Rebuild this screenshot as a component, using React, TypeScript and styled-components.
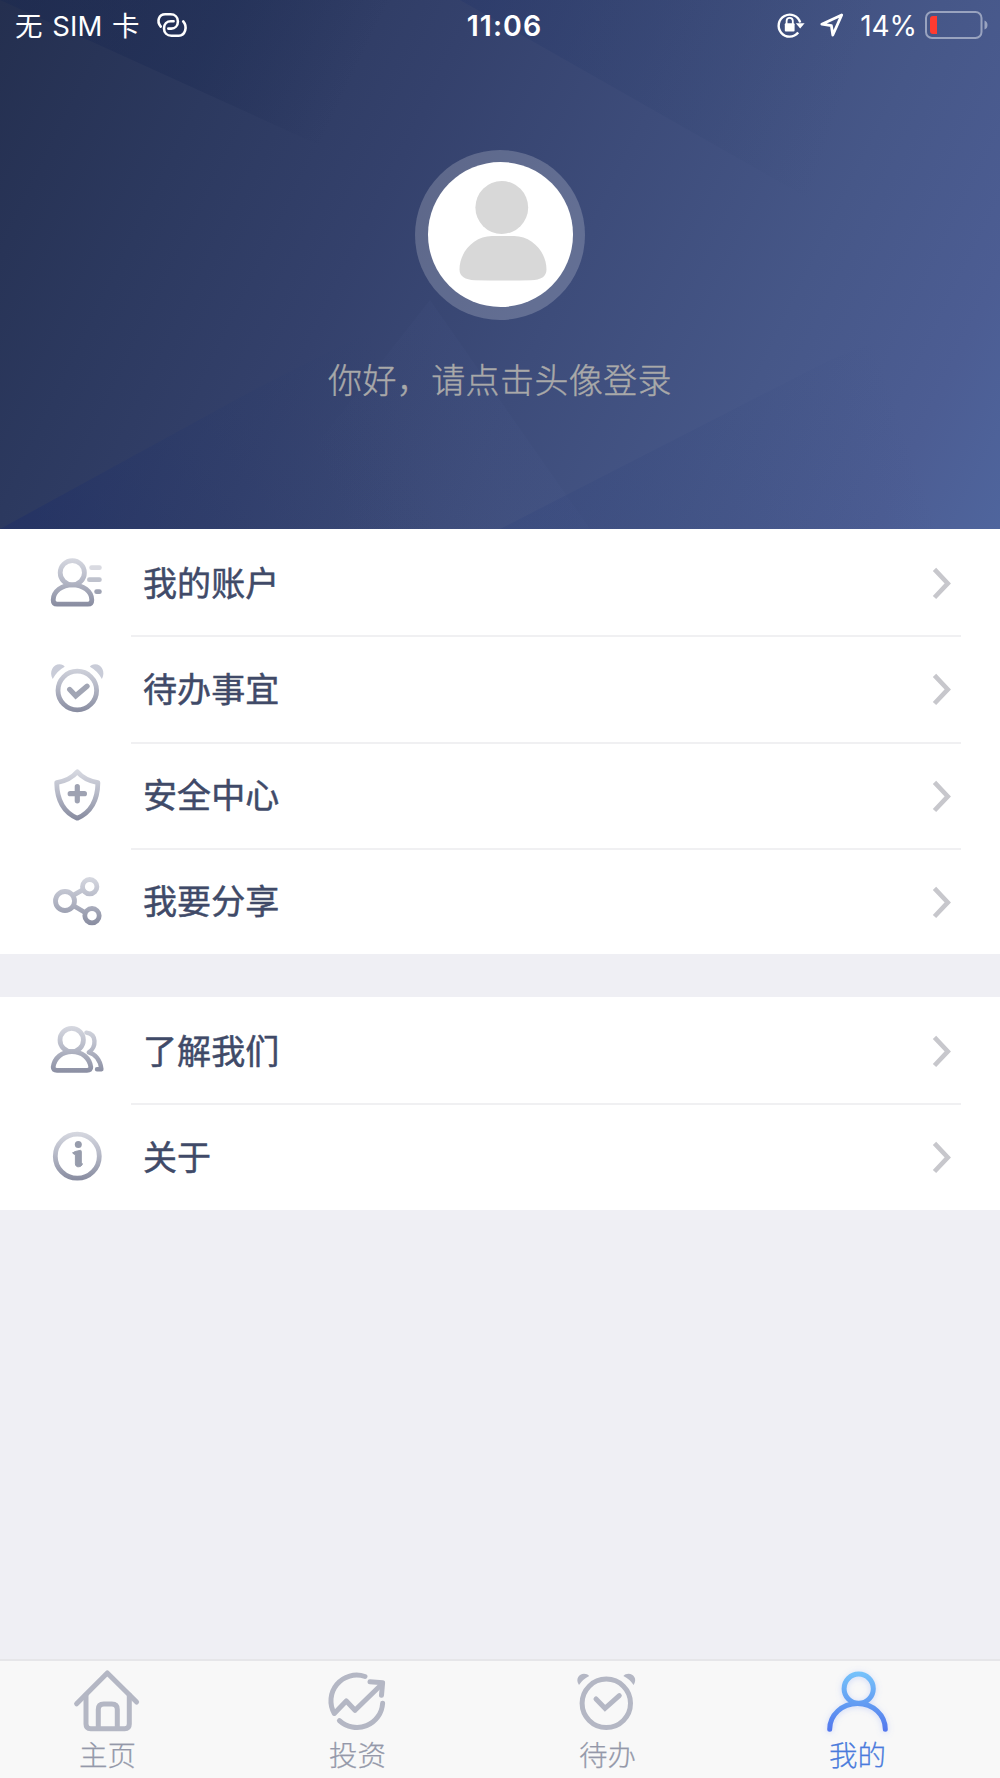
import React from "react";
import styled, { createGlobalStyle } from "styled-components";

const GlobalStyle = createGlobalStyle`
  * { box-sizing: border-box; }
  html, body { margin: 0; padding: 0; }
  body {
    background: #efeff4;
    font-family: Inter, "Noto Sans CJK SC", sans-serif;
  }
`;

const Screen = styled.div`
  width: 1000px;
  height: 1778px;
  display: flex;
  flex-direction: column;
  background: #efeff4;
  overflow: hidden;
`;

const Header = styled.header`
  position: relative;
  height: 529px;
  flex: none;
  display: flex;
  flex-direction: column;
  align-items: center;
  background: linear-gradient(116deg, #242f4f 0%, #2c395f 20%, #34416c 38%, #3d4c7a 56%, #465788 75%, #4c5d93 90%, #4f659d 100%);
`;

const Facets = styled.svg`
  position: absolute;
  inset: 0;
  width: 100%;
  height: 100%;
`;

const StatusBar = styled.div`
  position: relative;
  width: 100%;
  height: 50px;
  padding: 0 12px 0 15px;
  display: grid;
  grid-template-columns: 1fr auto 1fr;
  align-items: center;
  color: #fff;
  font-size: 28px;
  line-height: 50px;
`;

const StatusSide = styled.div<{ $end?: boolean }>`
  display: flex;
  align-items: center;
  justify-content: ${(p) => (p.$end ? "flex-end" : "flex-start")};
  white-space: pre;
`;

const Carrier = styled.span`
  width: 142px;
  font-size: 27.5px;
  letter-spacing: 0.2px;
  word-spacing: 1.5px;
`;

const Clock = styled.span`
  padding: 1px 0 0 6px;
  font-weight: 600;
  font-size: 28.5px;
  letter-spacing: 1.1px;
`;

const Percent = styled.span`
  margin: 0 8px 0 16px;
  font-size: 28px;
  letter-spacing: -0.1px;
`;

const Glyph = styled.svg<{ $gap?: number; $lift?: number }>`
  display: block;
  flex: none;
  margin-right: ${(p) => p.$gap ?? 0}px;
  margin-bottom: ${(p) => p.$lift ?? 0}px;
  overflow: visible;
`;

const Avatar = styled.button`
  position: relative;
  margin: 99.5px 0 0 0;
  width: 170px;
  height: 170px;
  padding: 12.5px;
  border: 0;
  border-radius: 50%;
  background: rgba(255, 255, 255, 0.2);
`;

const Portrait = styled.svg`
  display: block;
  width: 145px;
  height: 145px;
  border-radius: 50%;
  background: #fff;
`;

const Greeting = styled.p`
  position: relative;
  margin: 34.5px 0 0 0;
  line-height: 50px;
  font-size: 34px;
  letter-spacing: 0.4px;
  color: #a9a9a9;
  font-weight: 300;
  -webkit-text-stroke: 0.4px #a9a9a9;
  font-family: "Noto Sans CJK SC", sans-serif;
`;

const Section = styled.section<{ $gap?: boolean }>`
  flex: none;
  background: #fff;
  margin-top: ${(p) => (p.$gap ? 43 : 0)}px;
`;

const Row = styled.div`
  height: 106.25px;
  padding-left: 47px;
  display: flex;
  align-items: center;
`;

const RowBody = styled.div<{ $line: boolean }>`
  flex: 1;
  height: 100%;
  margin: 0 39px 0 23.5px;
  padding: 0 9.5px 0 12.5px;
  display: flex;
  align-items: center;
  justify-content: space-between;
  box-shadow: ${(p) => (p.$line ? "inset 0 2px 0 #f0f0f2" : "none")};
`;

const RowLabel = styled.span`
  font-family: "Noto Sans CJK SC", sans-serif;
  font-size: 34px;
  line-height: 50px;
  padding-bottom: 1px;
  letter-spacing: 0.1px;
  font-weight: 400;
  -webkit-text-stroke: 0.5px #404a68;
  color: #404a68;
`;

const TabBar = styled.nav`
  flex: none;
  margin-top: auto;
  height: 119px;
  display: flex;
  background: #f8f8f8;
  border-top: 2px solid #e6e6e9;
`;

const Tab = styled.div<{ $active?: boolean }>`
  width: 250px;
  padding: 5px 36px 0 0;
  display: flex;
  flex-direction: column;
  align-items: center;
  color: ${(p) => (p.$active ? "#4a7bdc" : "#9498a9")};
`;

const TabLabel = styled.span`
  padding-left: 1px;
  font-family: "Noto Sans CJK SC", sans-serif;
  font-size: 28.5px;
  line-height: 40px;
  font-weight: 300;
  -webkit-text-stroke: 0.25px currentColor;
`;

const TabGlyph = styled.svg`
  display: block;
  width: 70px;
  height: 70px;
  margin-bottom: -2px;
  overflow: visible;
`;

type IconName = "account" | "todo" | "shield" | "share" | "people" | "info";

const shapes: Record<IconName, React.ReactNode> = {
  account: (
    <>
      <circle cx="-4.7" cy="-9.3" r="12.1" />
      <path d="M-19.8 22.2H11Q14.8 22.2 14.8 18C14.8 9.5 6 2.8 -4.5 2.8C-15 2.8 -23.8 9.5 -23.8 18Q-23.8 22.2 -19.8 22.2Z" />
      <path stroke="#d9dae1" d="M14.6 -14.3H22.4" />
      <path stroke="#bfc2cd" d="M12.4 -2.3H22.4" />
      <path stroke="#9ea2b2" d="M19.6 9.7H22.4" />
    </>
  ),
  todo: (
    <>
      <circle cx="0.3" cy="2.5" r="19.3" />
      <path stroke="#a1a5b4" strokeWidth="5.3" strokeLinejoin="miter" d="M-7.3 1.5L-1.3 7.8L10 -1.8" />
      <g fill="#c9ccd8" stroke="none">
        <path d="M-24.3 -9C-28.3 -16 -24 -23.7 -17.5 -23.7C-15 -23.7 -13 -22.7 -12.3 -21.2Q-20 -17 -24.3 -9Z" />
        <path d="M24.9 -9C28.9 -16 24.6 -23.7 18.1 -23.7C15.6 -23.7 13.6 -22.7 12.9 -21.2Q20.6 -17 24.9 -9Z" />
      </g>
    </>
  ),
  shield: (
    <>
      <path d="M0.3 -23.2C-4 -18 -11 -14 -20.3 -12.3C-20 4 -14 17 0.3 23.2C14.6 17 20.6 4 20.9 -12.3C11.6 -14 4.6 -18 0.3 -23.2Z" />
      <path stroke="#9ea2b2" d="M-6.8 -1.3H7.4M0.3 -8.4V5.8" strokeWidth="5.2" />
    </>
  ),
  share: (
    <>
      <circle cx="-12" cy="0" r="9.5" />
      <circle cx="12.7" cy="-14.3" r="7.2" />
      <circle cx="15" cy="14.7" r="7.2" />
      <path d="M-3 -6.2L5.2 -10.8M-3 5L8 11.5" strokeLinecap="butt" />
    </>
  ),
  people: (
    <>
      <circle cx="-5.3" cy="-10" r="11.7" />
      <path d="M-20 20.3H10Q13.8 20.3 13.8 17C12.5 8 5 1.6 -5 1.6C-15 1.6 -22.5 8 -23.8 17Q-23.8 20.3 -20 20.3Z" />
      <path d="M9.4 -17.4C20 -16 19.5 -3 11.8 2.4C18 4 23.5 10 24.4 19.3H20" strokeWidth="4.4" />
    </>
  ),
  info: (
    <>
      <circle cx="0.3" cy="0.2" r="22" />
      <circle cx="1.3" cy="-11.6" r="3.5" fill="#979cac" stroke="none" />
      <path
        fill="#979cac"
        stroke="#979cac"
        strokeWidth="1"
        d="M-4 -3.2Q-3.5 -4.6 3.6 -5.6Q4.3 -5.6 4.3 -4.6V6.9Q5.5 6.9 5.3 8.4C4.5 10.9 -1.3 12.4 -1.6 7.9V-1.6Q-3.6 -1.2 -4 -3.2Z"
      />
    </>
  ),
};

function MenuIcon({ name }: { name: IconName }) {
  const id = `menu-${name}`;
  return (
    <Glyph width="60" height="60" viewBox="-30 -30 60 60" fill="none">
      <defs>
        <linearGradient id={id} gradientUnits="userSpaceOnUse" x1="0" y1="-24" x2="0" y2="24">
          <stop offset="0" stopColor="#d6d8e0" />
          <stop offset="0.45" stopColor="#b7bac8" />
          <stop offset="1" stopColor="#888ca0" />
        </linearGradient>
      </defs>
      <g stroke={`url(#${id})`} strokeWidth="4.8" strokeLinecap="round" strokeLinejoin="round">
        {shapes[name]}
      </g>
    </Glyph>
  );
}

function Chevron() {
  return (
    <Glyph width="20" height="34" viewBox="0 0 20 34" fill="none">
      <path d="M2.5 4.3L15.8 18.4L2.5 32.5" stroke="#c7c7cc" strokeWidth="4.6" />
    </Glyph>
  );
}

function MenuRow({ icon, label, first }: { icon: IconName; label: string; first?: boolean }) {
  return (
    <Row>
      <MenuIcon name={icon} />
      <RowBody $line={!first}>
        <RowLabel>{label}</RowLabel>
        <Chevron />
      </RowBody>
    </Row>
  );
}

const tabLine = {
  stroke: "#b4b7c4",
  strokeWidth: 5,
  strokeLinecap: "round" as const,
  strokeLinejoin: "round" as const,
};

export default function App() {
  return (
    <>
      <GlobalStyle />
      <Screen>
        <Header>
          <Facets viewBox="0 0 1000 529" preserveAspectRatio="none">
            <defs>
              <linearGradient id="facetTopLeft" gradientUnits="userSpaceOnUse" x1="60" y1="0" x2="330" y2="130">
                <stop offset="0" stopColor="#172650" stopOpacity="0.35" />
                <stop offset="0.5" stopColor="#172650" stopOpacity="0.3" />
                <stop offset="1" stopColor="#172650" stopOpacity="0" />
              </linearGradient>
              <linearGradient id="facetBottomLeft" gradientUnits="userSpaceOnUse" x1="30" y1="529" x2="400" y2="400">
                <stop offset="0" stopColor="#1c2c68" stopOpacity="0.42" />
                <stop offset="1" stopColor="#2c4070" stopOpacity="0" />
              </linearGradient>
              <linearGradient id="facetTop" gradientUnits="userSpaceOnUse" x1="480" y1="0" x2="840" y2="120">
                <stop offset="0" stopColor="#26376a" stopOpacity="0.4" />
                <stop offset="1" stopColor="#2f4470" stopOpacity="0" />
              </linearGradient>
              <linearGradient id="facetBottom" gradientUnits="userSpaceOnUse" x1="520" y1="529" x2="900" y2="400">
                <stop offset="0" stopColor="#30437c" stopOpacity="0.28" />
                <stop offset="1" stopColor="#30437c" stopOpacity="0" />
              </linearGradient>
              <linearGradient id="facetMiddle" gradientUnits="userSpaceOnUse" x1="480" y1="440" x2="330" y2="500">
                <stop offset="0" stopColor="#5a6aa0" stopOpacity="0.06" />
                <stop offset="1" stopColor="#5a6aa0" stopOpacity="0" />
              </linearGradient>
            </defs>
            <polygon points="0,0 480,0 330,150" fill="url(#facetTopLeft)" />
            <polygon points="0,529 250,392 430,300 590,529" fill="url(#facetBottomLeft)" />
            <polygon points="460,0 1000,0 1000,300 850,222" fill="url(#facetTop)" />
            <polygon points="430,300 590,529 250,529" fill="url(#facetMiddle)" />
            <polygon points="500,529 830,360 1000,290 1000,529" fill="url(#facetBottom)" />
          </Facets>

          <StatusBar>
            <StatusSide>
              <Carrier>无 SIM 卡</Carrier>
              <Glyph $lift={1} width="30" height="24" viewBox="0 0 30 24" fill="none" stroke="#fff" strokeWidth="2.6" strokeLinecap="round">
                <path d="M3.8 13.6C-0.8 8 2 1.3 8.2 1.3H13.5C18 1.3 20.9 4.4 20.9 8.4C20.9 12.9 17.8 15.6 14.2 15.6H11.3" />
                <path d="M26.2 8.4C31 14 28 22.7 21.8 22.7H14.5C10 22.7 7 19.6 7 15.4C7 11 10 8.2 13.8 8.2H16.6" />
              </Glyph>
            </StatusSide>
            <Clock>11:06</Clock>
            <StatusSide $end>
              <Glyph $lift={2} width="28" height="26" viewBox="0 0 28 26" fill="none" $gap={15}>
                <path d="M21.2 20.6A11 11 0 1 1 23.2 10.5" stroke="#fff" strokeWidth="2.4" />
                <path d="M18.8 11.2H27.6L23.2 16.6Z" fill="#fff" />
                <rect x="7.8" y="11.2" width="9.8" height="8.4" rx="1" fill="#fff" />
                <path d="M9.6 12V9A3.1 3.1 0 0 1 15.8 9V12" stroke="#fff" strokeWidth="1.8" />
              </Glyph>
              <Glyph $lift={2} width="24" height="24" viewBox="0 0 24 24" fill="none">
                <path d="M21.7 2L1.8 11.2L11.4 12.7L12.8 22Z" stroke="#fff" strokeWidth="2.8" strokeLinejoin="round" />
              </Glyph>
              <Percent>14%</Percent>
              <Glyph $lift={2} width="63" height="28" viewBox="0 0 63 28" fill="none">
                <rect x="1" y="1" width="55.5" height="26" rx="6" stroke="#99a3bf" strokeWidth="2" />
                <path d="M59.5 9.5Q62.5 10.5 62.5 14T59.5 18.5Z" fill="#99a3bf" />
                <path d="M12 5V23H8Q5 23 5 20V8Q5 5 8 5Z" fill="#ff3b30" />
              </Glyph>
            </StatusSide>
          </StatusBar>

          <Avatar aria-label="登录">
            <Portrait viewBox="0 0 145 145">
              <circle cx="73.8" cy="45.5" r="26.4" fill="#d8d8d8" />
              <path
                fill="#d8d8d8"
                d="M64 74H86C104 74 118.5 90 118.5 107.5C118.5 114.5 113 118 103 118.2Q75 119 47 118.2C37 117.8 31.5 114.5 31.5 107.5C31.5 90 46 74 64 74Z"
              />
            </Portrait>
          </Avatar>
          <Greeting>你好，请点击头像登录</Greeting>
        </Header>

        <Section>
          <MenuRow icon="account" label="我的账户" first />
          <MenuRow icon="todo" label="待办事宜" />
          <MenuRow icon="shield" label="安全中心" />
          <MenuRow icon="share" label="我要分享" />
        </Section>
        <Section $gap>
          <MenuRow icon="people" label="了解我们" first />
          <MenuRow icon="info" label="关于" />
        </Section>

        <TabBar>
          <Tab>
            <TabGlyph viewBox="-35 -35 70 70" fill="none" {...tabLine}>
              <path d="M-30.4 2.8L0.3 -28L29.6 1" />
              <path d="M-21 -6V23Q-21 27.7 -16.3 27.7H17.6Q22.3 27.7 22.3 23V-6" />
              <path d="M-8.7 27V8.5Q-8.7 3 -3.2 3H4.8Q10.3 3 10.3 8.5V27" />
            </TabGlyph>
            <TabLabel>主页</TabLabel>
          </Tab>
          <Tab>
            <TabGlyph viewBox="-35 -35 70 70" fill="none" {...tabLine}>
              <path d="M8 -24.5A25.7 25.7 0 0 0 -22.7 12.5L-10.7 0L-2 9.3L25 -17" />
              <path d="M13 -19.3L25.6 -18.3L24.5 -5.8" />
              <path d="M25.6 2.3A25.7 25.7 0 0 1 -17.6 19.6" />
            </TabGlyph>
            <TabLabel>投资</TabLabel>
          </Tab>
          <Tab>
            <TabGlyph viewBox="-35 -35 70 70" fill="none" {...tabLine}>
              <circle cx="-0.7" cy="2.3" r="24.2" />
              <path d="M-11 -2L-2 7.3L12.3 -5.3" strokeLinejoin="miter" />
              <g fill="#b4b7c4" stroke="none">
                <path d="M-28 -16C-32 -22 -28 -27.3 -23 -27.3C-20.8 -27.3 -19 -26.5 -17.8 -25Q-24 -22 -28 -16Z" />
                <path d="M26.6 -16C30.6 -22 26.6 -27.3 21.6 -27.3C19.4 -27.3 17.6 -26.5 16.4 -25Q22.6 -22 26.6 -16Z" />
              </g>
            </TabGlyph>
            <TabLabel>待办</TabLabel>
          </Tab>
          <Tab $active>
            <TabGlyph viewBox="-35 -35 70 70" fill="none">
              <defs>
                <linearGradient id="me" gradientUnits="userSpaceOnUse" x1="0" y1="-29" x2="0" y2="30">
                  <stop offset="0" stopColor="#76c3fb" />
                  <stop offset="0.5" stopColor="#649ff3" />
                  <stop offset="1" stopColor="#5277ed" />
                </linearGradient>
                <filter id="glow" x="-40%" y="-40%" width="180%" height="180%">
                  <feDropShadow dx="0" dy="1" stdDeviation="3" floodColor="#6f8df5" floodOpacity="0.3" />
                </filter>
              </defs>
              <g stroke="url(#me)" strokeWidth="5" strokeLinecap="round" filter="url(#glow)">
                <circle cx="1.7" cy="-12.3" r="14.6" />
                <path d="M-27.3 28.2C-27.3 14 -15 2.5 0.5 2.5C16 2.5 28.3 14 28.3 28.2" />
              </g>
            </TabGlyph>
            <TabLabel>我的</TabLabel>
          </Tab>
        </TabBar>
      </Screen>
    </>
  );
}
